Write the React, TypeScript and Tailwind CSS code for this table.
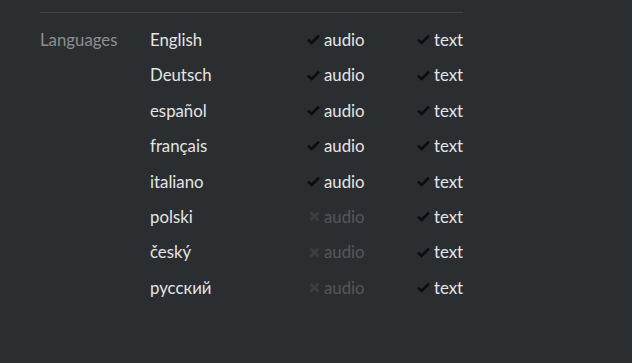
const languages = [
  { name: "English", audio: true, text: true },
  { name: "Deutsch", audio: true, text: true },
  { name: "español", audio: true, text: true },
  { name: "français", audio: true, text: true },
  { name: "italiano", audio: true, text: true },
  { name: "polski", audio: false, text: true },
  { name: "český", audio: false, text: true },
  { name: "русский", audio: false, text: true },
];

function Check() {
  return (
    <svg width="13" height="11" viewBox="0 0 13 11" className="mr-[4px] shrink-0">
      <path d="M1 5.6 L4.6 9 L12 1.6" fill="none" stroke="#0b0c0d" strokeWidth="2.6" />
    </svg>
  );
}

function Cross() {
  return (
    <svg width="11" height="11" viewBox="0 0 11 11" className="mr-[4px] ml-[2px] shrink-0">
      <path d="M1.5 1.5 L9.5 9.5 M9.5 1.5 L1.5 9.5" fill="none" stroke="#3c3f42" strokeWidth="2.6" />
    </svg>
  );
}

function Support({ ok, label }: { ok: boolean; label: string }) {
  return (
    <div className="flex items-center">
      {ok ? <Check /> : <Cross />}
      <span className={ok ? "text-[#e4e4e4]" : "text-[#55585b]"}>{label}</span>
    </div>
  );
}

export default function App() {
  return (
    <div
      className="w-[632px] h-[363px] bg-[#2b2e31] pt-3 pl-10 text-[16.8px]"
      style={{ fontFamily: "Lato, 'Open Sans', sans-serif" }}
    >
      <div className="w-[423px] h-px bg-[#43464a]" />
      <div className="mt-[9px] flex">
        <div className="w-[110px] h-[35.4px] flex items-center text-[#8c8f92]">Languages</div>
        <div className="flex flex-col">
          {languages.map((lang) => (
            <div key={lang.name} className="h-[35.4px] flex items-center">
              <div className="w-[157px] text-[#e4e4e4]">{lang.name}</div>
              <div className="w-[110px]">
                <Support ok={lang.audio} label="audio" />
              </div>
              <Support ok={lang.text} label="text" />
            </div>
          ))}
        </div>
      </div>
    </div>
  );
}
